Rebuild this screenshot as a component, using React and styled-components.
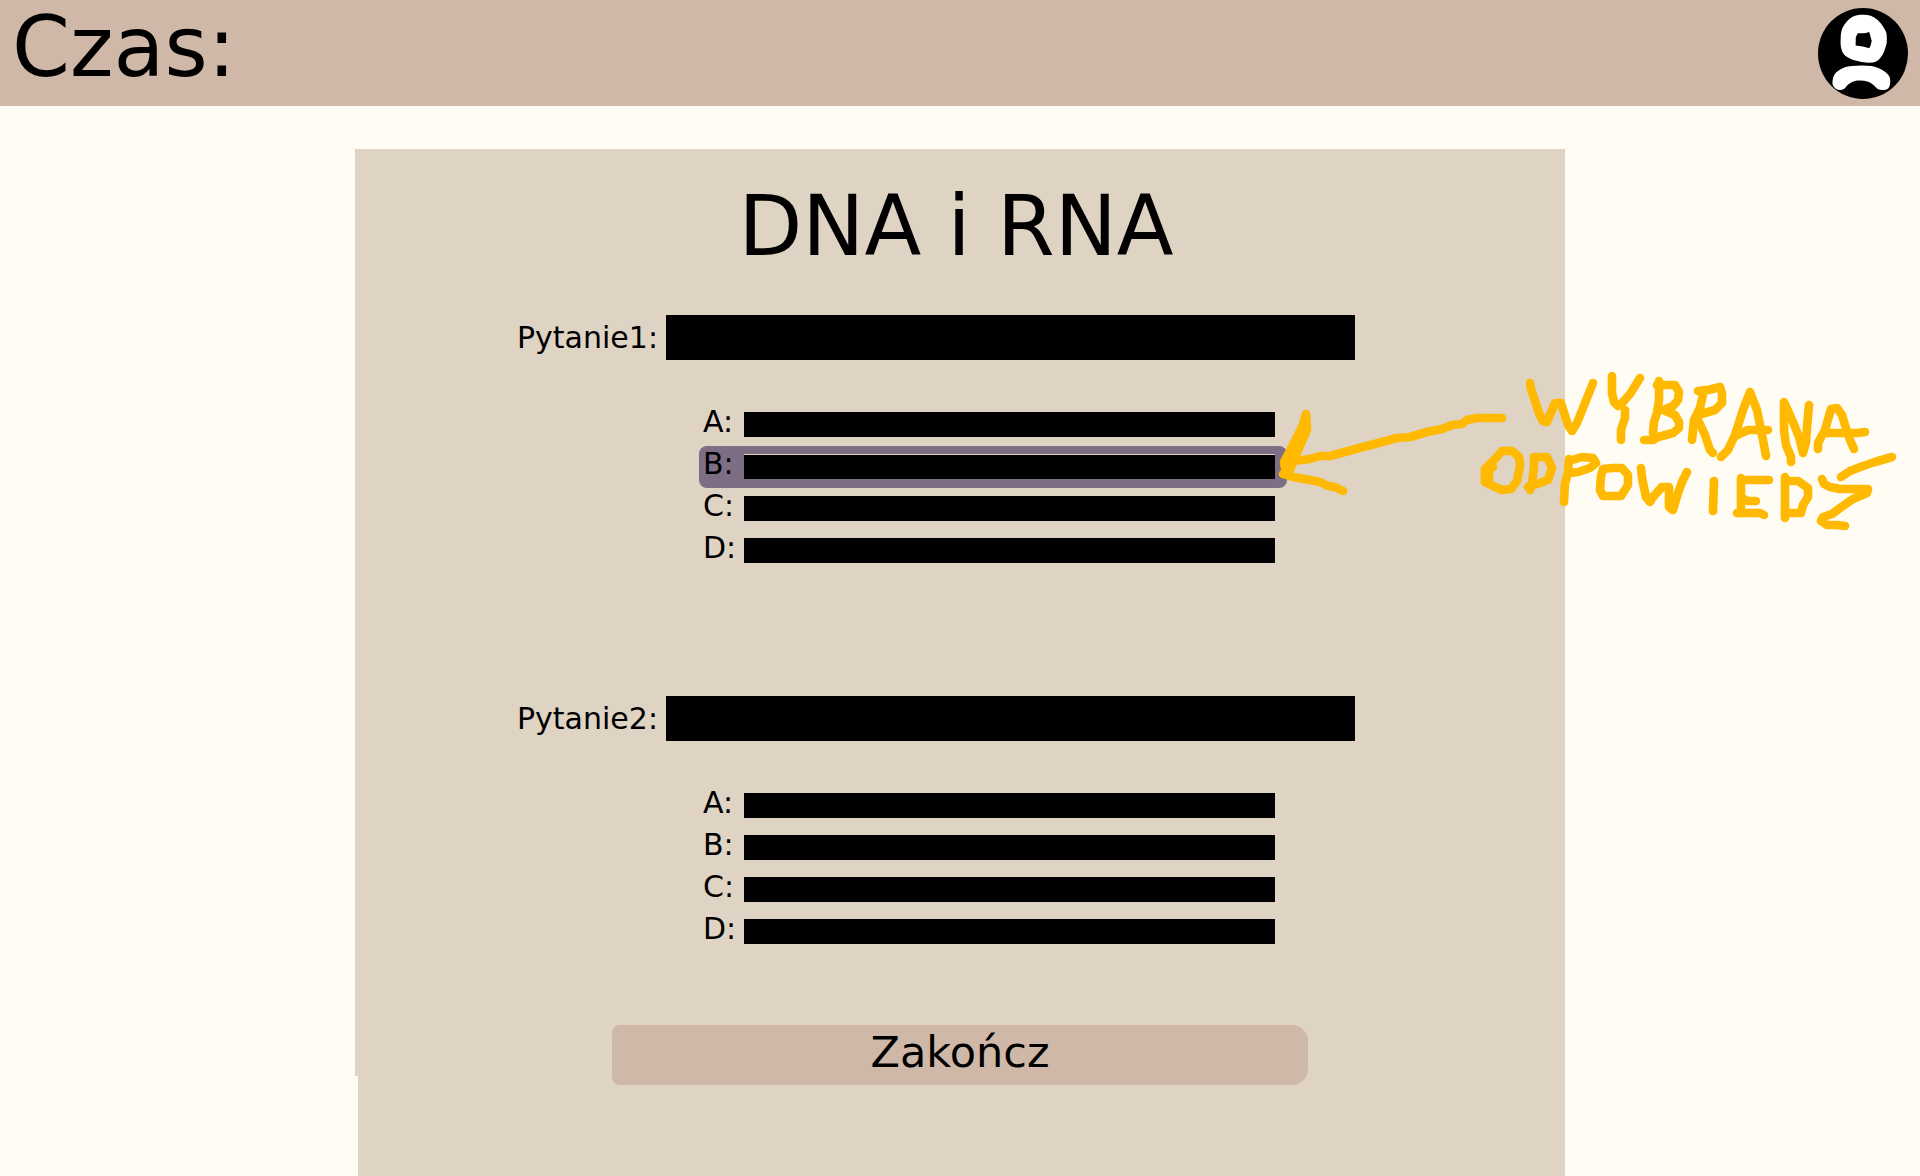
import React, { useState } from "react";
import styled, { createGlobalStyle } from "styled-components";

const GlobalStyle = createGlobalStyle`
  *, *::before, *::after { box-sizing: border-box; }
  body {
    margin: 0;
    background: #fffcf4;
    color: #000;
    font-family: "DejaVu Sans", Verdana, sans-serif;
  }
`;

const Page = styled.div`
  min-height: 100vh;
  display: flex;
  flex-direction: column;
  overflow-x: hidden;
`;

const Header = styled.header`
  display: flex;
  align-items: flex-start;
  justify-content: space-between;
  height: 106px;
  padding: 0 12px;
  background: #d0b8a8;
`;

const Timer = styled.div`
  font-size: 83px;
  line-height: 96px;
`;

const AvatarButton = styled.button`
  margin-top: 8px;
  padding: 0;
  border: 0;
  background: none;
  cursor: pointer;

  svg {
    display: block;
  }
`;

const Main = styled.main`
  flex: 1;
  display: flex;
  justify-content: center;
  padding-top: 43px;
`;

const Panel = styled.form`
  position: relative;
  display: flex;
  flex-direction: column;
  align-items: center;
  width: 100%;
  max-width: 1210px;
  padding: 28px 24px 48px;
  background: #dfd3c3;

  &::after {
    content: "";
    position: absolute;
    left: 0;
    bottom: 0;
    width: 3px;
    height: 100px;
    background: #fffcf4;
  }
`;

const Title = styled.h1`
  margin: 0 0 38px;
  padding-right: 8px;
  font-size: 83px;
  font-weight: 400;
  line-height: 100px;
`;

const Questions = styled.div`
  display: flex;
  flex-direction: column;
  gap: 124px;
  width: 100%;
  max-width: 886px;
  padding-right: 48px;
`;

const Question = styled.section`
  display: flex;
  flex-direction: column;
  gap: 44px;
`;

const Prompt = styled.div`
  display: grid;
  grid-template-columns: 149px 1fr;
  align-items: center;
  height: 45px;
`;

const PromptLabel = styled.h2`
  margin: 0;
  font-size: 30px;
  font-weight: 400;
  line-height: 36px;
`;

const PromptBar = styled.span`
  height: 45px;
  background: #000;
`;

const Answers = styled.div`
  display: flex;
  flex-direction: column;
  margin: 0 68px 0 182px;
`;

const Answer = styled.label`
  position: relative;
  display: grid;
  grid-template-columns: 41px 1fr;
  align-items: start;
  height: 42px;
  padding: 0 12px 0 4px;
  border-radius: 8px;
  background: ${(p) => (p.$selected ? "#7d6e83" : "transparent")};
  font-size: 30px;
  line-height: 36px;
  cursor: pointer;
`;

const HiddenRadio = styled.input`
  position: absolute;
  opacity: 0;
  margin: 0;
`;

const AnswerBar = styled.span`
  height: 25px;
  margin-top: 8px;
  border-top: ${(p) => (p.$selected ? "1px solid #dfd3c3" : "0")};
  background: #000;
`;

const FinishButton = styled.button`
  width: 100%;
  max-width: 696px;
  height: 60px;
  margin-top: 72px;
  padding: 0 0 6px;
  border: 0;
  border-radius: 8px 16px 16px 8px;
  background: #d0b8a8;
  color: inherit;
  font-family: inherit;
  font-size: 43px;
  line-height: 50px;
  cursor: pointer;
`;

const Note = styled.svg`
  position: absolute;
  left: 915px;
  top: 211px;
  pointer-events: none;
`;

const strokes = [
  // arrow
  "1502,418 1477,418 1467,420 1462,424 1452,425 1442,429 1427,432 1410,437 1397,438 1352,450 1330,456 1320,456 1310,459 1293,461",
  "1283,474 1293,477 1310,480 1320,482 1328,486 1335,487 1343,491",
  // WYBRANA
  "1530,383 1531,389 1539,413 1543,421 1547,422 1555,403 1561,403 1568,425 1572,431 1577,423 1593,383",
  "1612,376 1612,393 1614,402 1618,406 1623,402 1630,394 1640,378",
  "1625,410 1625,418 1621,430 1621,440",
  "1659,381 1659,400 1657,413 1654,422 1653,433",
  "1657,385 1675,385 1679,392 1678,400 1673,406 1663,410 1675,415 1679,422 1679,428 1673,433 1658,437 1653,440 1644,440",
  "1704,390 1700,408 1694,420 1692,440",
  "1698,391 1708,390 1720,387 1722,393 1722,403 1715,410 1698,415",
  "1698,420 1705,435 1710,450 1713,453",
  "1721,457 1728,450 1735,435 1743,410 1750,392 1757,410 1760,425 1763,440 1766,456",
  "1735,436 1748,430 1768,430",
  "1791,462 1791,457 1786,445 1784,430 1784,402 1793,422 1799,437 1803,453 1806,442 1807,427 1809,405",
  "1818,449 1818,443 1825,430 1831,409 1837,408 1842,415 1845,425 1850,440 1854,449",
  "1826,433 1857,433 1865,432",
  // ODPOWIEDŹ
  "1493,467 1488,470 1485,482 1493,486 1502,490 1511,489 1517,481 1520,466 1519,457 1512,451 1502,451 1495,459 1485,469 1485,482 1489,480 1489,468",
  "1534,457 1534,467 1532,483 1530,490",
  "1534,457 1547,457 1552,468 1548,480 1540,483 1528,487",
  "1569,459 1568,473 1565,483 1564,502",
  "1569,461 1582,457 1593,458 1596,463 1590,468 1578,472 1570,473",
  "1600,490 1601,476 1603,469 1612,468 1622,468 1628,475 1628,485 1621,496 1603,496 1600,490",
  "1641,468 1642,478 1646,497 1650,502 1653,497 1662,487 1669,487 1669,507 1673,510 1678,493 1682,482 1687,472",
  "1714,481 1713,511",
  "1741,478 1741,513",
  "1741,480 1769,480",
  "1742,498 1748,501 1756,501",
  "1737,513 1760,513 1764,515",
  "1785,477 1785,518",
  "1785,481 1798,481 1808,488 1808,497 1803,505 1801,513 1785,513",
  "1822,479 1824,484 1830,487 1840,489 1868,489 1867,493 1853,499 1840,508 1832,514 1823,517 1821,521 1827,525 1837,525 1845,526",
  "1841,477 1850,471 1863,466 1875,462 1892,457",
];

function HandwrittenNote() {
  return (
    <Note
      width="640"
      height="180"
      viewBox="1270 360 640 180"
      role="img"
      aria-label="Wybrana odpowiedź"
      fill="none"
      stroke="#ffb900"
      strokeWidth="8.6"
      strokeLinecap="round"
      strokeLinejoin="round"
    >
      <path
        d="M1306 414L1307 430L1296 455L1290 470L1286 474L1284 462L1292 447L1303 425Z"
        fill="#ffb900"
      />
      {strokes.map((points) => (
        <polyline key={points} points={points} />
      ))}
    </Note>
  );
}

function AvatarIcon() {
  return (
    <svg width="90" height="91" viewBox="0 0 90 91" aria-hidden="true">
      <ellipse cx="45" cy="45.5" rx="45" ry="45.5" fill="#000" />
      <path
        fill="#fff"
        d="M45.3 6.7C51 6.7 55 8 58.7 11.3C63 15 65 18 68 23.7C69 27 69 31 68.7 35.3C67 41 66 46 62 50.3C59 54 56 54.7 52 54.7C46 54.7 41 53.5 35.3 52C29 49.5 25 47 23.7 42C22.3 38 22.5 34 22.7 30.3C22.7 27 23 24 24.3 20.3C27 15 30 12 33.7 9.3C37 7.2 41 6.7 45.3 6.7Z"
      />
      <path fill="#000" d="M39.7 25.3L47 25.3L51.3 24L52.3 28L53.7 32.7L52.8 37L51.3 40.3L45 38.5L37.6 37.6L37.8 29.3Z" />
      <path
        fill="#fff"
        d="M14.7 72C15 68 17 65 20.3 62.7C24 60 28 58.5 33.7 58C40 57.3 47 57.3 53.7 58C59 59 63 61 67 63.7C70 66 71.5 68 72 70.3C72.4 74 72.4 76.5 71.3 78.7C70 81 68.5 82 66 82C63 82 61 82 58.7 80.3C56 77.5 54 75.3 50.3 73.7C46 72.5 41 72.3 37 73C33.5 74 31 75.5 28.7 78C27 80.5 25 82 22 82C19 82 17 80.7 15.3 78C14.3 76 14.3 74 14.7 72Z"
      />
    </svg>
  );
}

const LETTERS = ["A", "B", "C", "D"];

function QuestionBlock({ number, initial }) {
  const [selected, setSelected] = useState(initial);
  const titleId = `question-${number}`;
  return (
    <Question>
      <Prompt>
        <PromptLabel id={titleId}>Pytanie{number}:</PromptLabel>
        <PromptBar />
      </Prompt>
      <Answers role="radiogroup" aria-labelledby={titleId}>
        {LETTERS.map((letter) => (
          <Answer key={letter} $selected={selected === letter}>
            <span>
              <HiddenRadio
                type="radio"
                name={titleId}
                value={letter}
                checked={selected === letter}
                onChange={() => setSelected(letter)}
              />
              {letter}:
            </span>
            <AnswerBar $selected={selected === letter} />
          </Answer>
        ))}
      </Answers>
    </Question>
  );
}

export default function App() {
  return (
    <Page>
      <GlobalStyle />
      <Header>
        <Timer>Czas:</Timer>
        <AvatarButton type="button" aria-label="Profil">
          <AvatarIcon />
        </AvatarButton>
      </Header>
      <Main>
        <Panel onSubmit={(e) => e.preventDefault()}>
          <Title>DNA i RNA</Title>
          <Questions>
            <QuestionBlock number={1} initial="B" />
            <QuestionBlock number={2} initial={null} />
          </Questions>
          <FinishButton type="submit">Zakończ</FinishButton>
          <HandwrittenNote />
        </Panel>
      </Main>
    </Page>
  );
}
